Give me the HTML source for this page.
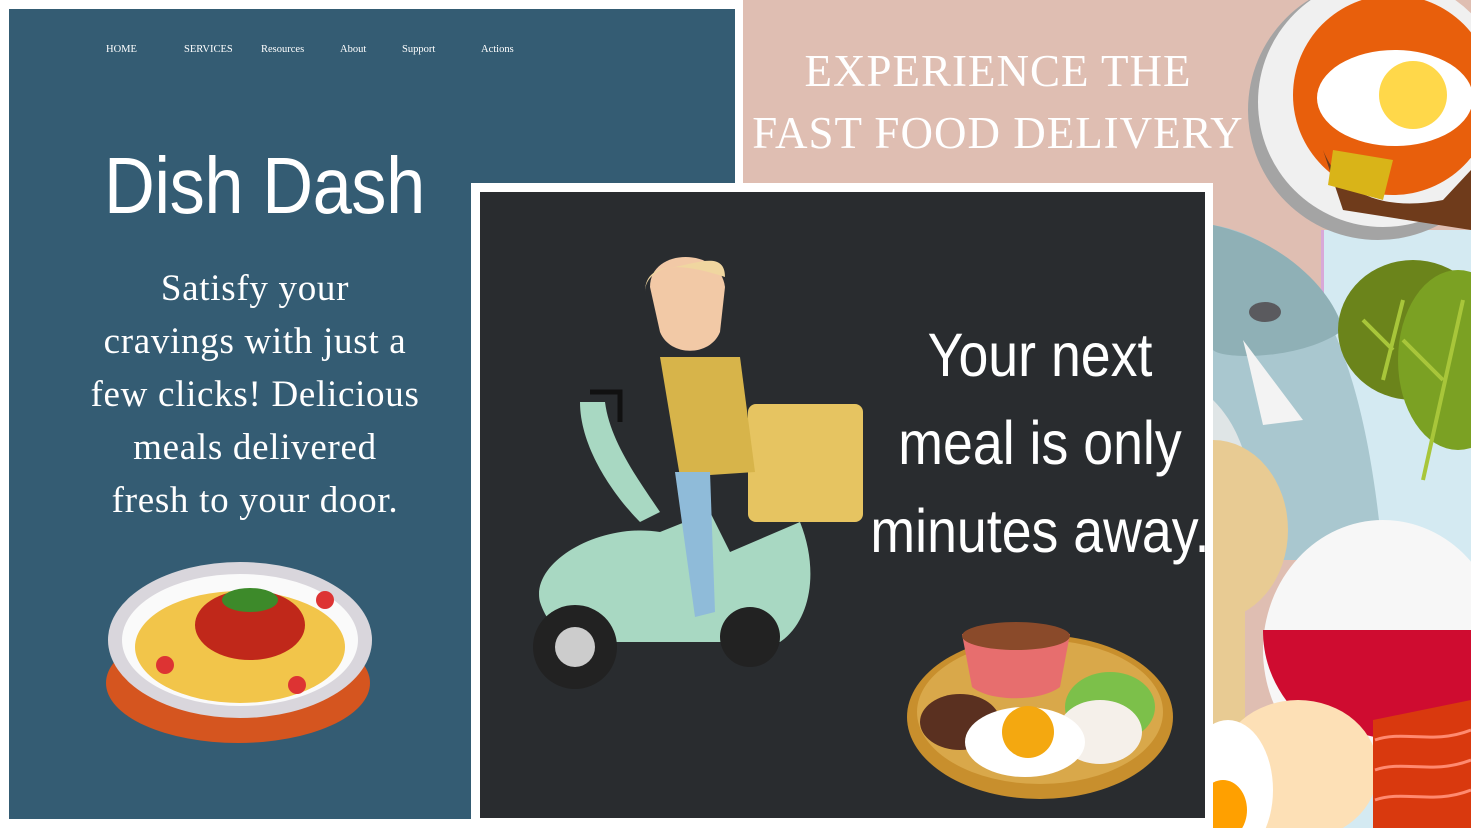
<!DOCTYPE html>
<html><head><meta charset="utf-8"><style>
*{margin:0;padding:0;box-sizing:border-box}
body{width:1471px;height:828px;overflow:hidden;background:#fff;position:relative;font-family:"Liberation Serif",serif}
.blue{position:absolute;left:9px;top:9px;width:726px;height:810px;background:#345c73}
.nav{position:absolute;top:44px;color:#fff;font-size:10.5px;font-family:"Liberation Serif",serif}
.pink{position:absolute;left:743px;top:0;width:728px;height:828px;background:#dfbeb2;overflow:hidden}
.exp{position:absolute;left:743px;width:510px;text-align:center;color:#fff;font-size:45px;line-height:62px;top:40px;letter-spacing:1px;white-space:nowrap}
.title{position:absolute;left:104px;top:140px;color:#fff;font-family:"Liberation Sans",sans-serif;font-size:80px;transform:scaleX(0.88);transform-origin:left;letter-spacing:-0.5px}
.para{position:absolute;left:30px;width:450px;top:262px;text-align:center;color:#fff;font-size:37px;line-height:53px;letter-spacing:0.7px;white-space:nowrap}
.card{position:absolute;left:471px;top:183px;width:742px;height:650px;background:#fff}
.dark{position:absolute;left:480px;top:192px;width:725px;height:626px;background:#292c2f;overflow:hidden}
.next{position:absolute;left:820px;width:440px;top:311px;text-align:center;color:#fff;font-family:"Liberation Sans",sans-serif;font-size:61px;line-height:88px;transform:scaleX(0.88);transform-origin:center}
</style></head><body>
<div class="pink">
<svg width="728" height="828" style="position:absolute;left:0;top:0">
 <rect x="580" y="230" width="148" height="600" fill="#d4eaf2"/>
 <rect x="578" y="230" width="3" height="380" fill="#d8a8d8"/>
 <path d="M470 225 C560 240 620 330 640 560 L470 560Z" fill="#a9c7cf"/>
 <path d="M470 225 C540 240 590 290 600 330 C560 360 480 360 470 350Z" fill="#8fb0b6"/>
 <ellipse cx="522" cy="312" rx="16" ry="10" fill="#5a5a5e"/>
 <path d="M500 340 L560 420 L520 425 L505 360Z" fill="#f3f3f3"/>
 <path d="M470 400 C500 430 510 470 520 560 L470 560Z" fill="#dfe5e6"/>
 <ellipse cx="470" cy="530" rx="75" ry="90" fill="#e8cb93"/>
 <rect x="470" y="560" width="32" height="270" fill="#e8cb93"/>
 <ellipse cx="670" cy="330" rx="75" ry="70" fill="#6b841b"/>
 <ellipse cx="715" cy="360" rx="60" ry="90" fill="#7ba123"/>
 <path d="M640 380 L660 300 M650 350 L620 320 M720 300 L680 480 M700 380 L660 340" stroke="#a8c63a" stroke-width="4" fill="none"/>
 <ellipse cx="640" cy="650" rx="120" ry="130" fill="#f7f7f7"/>
 <path d="M520 630 L728 630 L728 760 L560 720 C530 690 520 660 520 630Z" fill="#cf0c30"/>
 <ellipse cx="555" cy="770" rx="80" ry="70" fill="#fde0b6"/>
 <ellipse cx="485" cy="790" rx="45" ry="70" fill="#fff"/>
 <ellipse cx="480" cy="810" rx="24" ry="30" fill="#ffa000"/>
 <path d="M630 720 L728 700 L728 828 L630 828Z" fill="#d9390e"/>
 <path d="M632 740 C660 730 690 745 728 730 M632 770 C660 760 690 775 728 760 M632 800 C660 790 690 805 728 790" stroke="#ff8a70" stroke-width="3" fill="none"/>
 <circle cx="635" cy="110" r="130" fill="#a4a4a4"/>
 <circle cx="640" cy="102" r="125" fill="#f0f0f0"/>
 <circle cx="650" cy="95" r="100" fill="#e85f0c"/>
 <path d="M580 150 C600 200 650 210 700 200 L728 170 L728 230 L600 210Z" fill="#6f3b1b"/>
 <path d="M590 150 L650 160 L640 200 L585 185Z" fill="#d9b418"/>
 <ellipse cx="652" cy="98" rx="78" ry="48" fill="#fff"/>
 <circle cx="670" cy="95" r="34" fill="#ffd84a"/>
</svg></div>
<div class="exp">EXPERIENCE THE<br>FAST FOOD DELIVERY</div>
<div class="blue"></div>
<div class="nav" style="left:106px">HOME</div>
<div class="nav" style="left:184px">SERVICES</div>
<div class="nav" style="left:261px">Resources</div>
<div class="nav" style="left:340px">About</div>
<div class="nav" style="left:402px">Support</div>
<div class="nav" style="left:481px">Actions</div>
<div class="title">Dish Dash</div>
<div class="para">Satisfy your<br>cravings with just a<br>few clicks! Delicious<br>meals delivered<br>fresh to your door.</div>
<svg width="280" height="200" style="position:absolute;left:100px;top:555px">
 <ellipse cx="138" cy="128" rx="132" ry="60" fill="#d5551f"/>
 <ellipse cx="140" cy="85" rx="132" ry="78" fill="#d9d6dc"/>
 <ellipse cx="140" cy="85" rx="118" ry="66" fill="#fafafa"/>
 <ellipse cx="140" cy="92" rx="105" ry="56" fill="#f2c54a"/>
 <ellipse cx="150" cy="70" rx="55" ry="35" fill="#c0281a"/>
 <ellipse cx="150" cy="45" rx="28" ry="12" fill="#3d8a2a"/>
 <circle cx="225" cy="45" r="9" fill="#d33"/><circle cx="197" cy="130" r="9" fill="#d33"/><circle cx="65" cy="110" r="9" fill="#d33"/>
</svg>
<div class="card"></div>
<div class="dark">
<svg width="725" height="626" style="position:absolute;left:0;top:0">
 <rect x="268" y="212" width="115" height="118" rx="8" fill="#e6c461"/>
 <path d="M60 410 C50 370 120 330 180 340 L230 320 L250 360 L320 330 C340 380 330 430 300 450 L130 450 C90 450 70 440 60 410Z" fill="#a8d8c2"/>
 <circle cx="95" cy="455" r="42" fill="#222"/><circle cx="95" cy="455" r="20" fill="#ccc"/>
 <circle cx="270" cy="445" r="30" fill="#222"/>
 <path d="M140 230 L140 200 L110 200" stroke="#111" stroke-width="5" fill="none"/>
 <path d="M100 210 C100 260 140 310 160 330 L180 320 C160 290 130 250 125 210Z" fill="#a8d8c2"/>
 <path d="M180 165 L260 165 L275 280 L200 285Z" fill="#d7b44a"/>
 <path d="M195 280 L230 280 L235 420 L215 425Z" fill="#8fbbd9"/>
 <path d="M170 95 C170 55 240 55 245 95 L240 140 C230 165 190 165 180 140Z" fill="#f2c9a6"/>
 <path d="M165 100 C165 70 200 70 245 85 C245 60 220 70 195 75 C180 75 165 85 165 100Z" fill="#f0d6a0"/>
</svg>
<svg width="280" height="200" style="position:absolute;left:420px;top:420px">
 <ellipse cx="140" cy="105" rx="133" ry="82" fill="#c88f2d"/>
 <ellipse cx="140" cy="100" rx="123" ry="72" fill="#d9a84a"/>
 <path d="M62 22 L170 22 L160 75 C140 90 90 90 72 75Z" fill="#e76e6e"/>
 <ellipse cx="116" cy="24" rx="54" ry="14" fill="#8a4a2a"/>
 <ellipse cx="60" cy="110" rx="40" ry="28" fill="#5a3020"/>
 <ellipse cx="210" cy="95" rx="45" ry="35" fill="#7cc04a"/>
 <ellipse cx="200" cy="120" rx="42" ry="32" fill="#f5f0ea"/>
 <ellipse cx="125" cy="130" rx="60" ry="35" fill="#fff"/>
 <circle cx="128" cy="120" r="26" fill="#f4a810"/>
</svg>
</div>
<div class="next">Your next<br>meal is only<br>minutes away.</div>
</body></html>
